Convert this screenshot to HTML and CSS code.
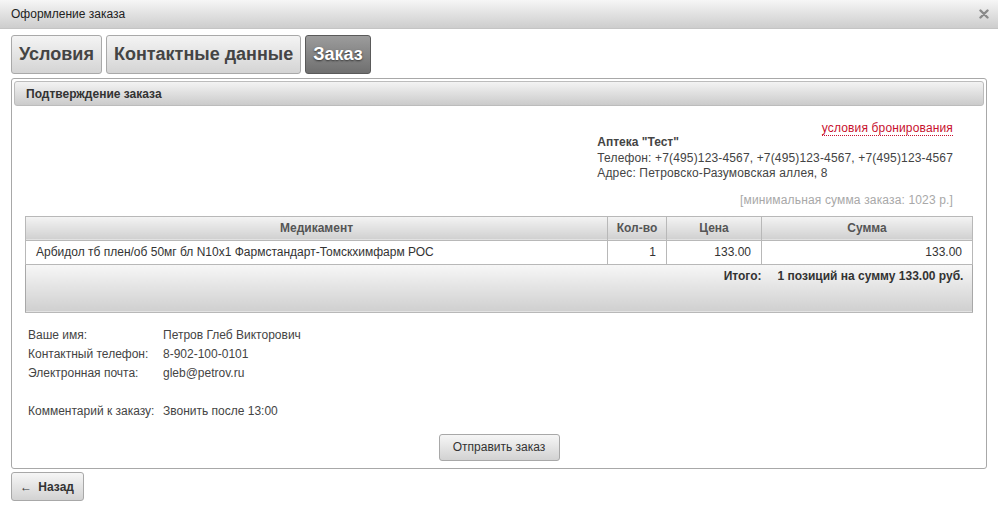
FILE: index.html
```html
<!DOCTYPE html>
<html lang="ru">
<head>
<meta charset="utf-8">
<title>Оформление заказа</title>
<link rel="stylesheet" href="styles.css">
</head>
<body>
<div class="dialog">
  <div class="titlebar">
    <span class="title">Оформление заказа</span>
    <span class="close" aria-label="Закрыть">
      <svg width="10" height="10" viewBox="0 0 10 10"><path d="M1.5 1.5 L8.5 8.5 M8.5 1.5 L1.5 8.5" stroke="#8a8a8a" stroke-width="2.4" stroke-linecap="round"/></svg>
    </span>
  </div>

  <div class="tabs">
    <div class="tab">Условия</div>
    <div class="tab">Контактные данные</div>
    <div class="tab active">Заказ</div>
  </div>

  <div class="panel">
    <div class="panel-head">Подтверждение заказа</div>
    <div class="panel-body">
      <div class="shop">
        <div class="shop-inner">
          <div class="terms-row"><a class="terms" href="#">условия бронирования</a></div>
          <div class="shop-name">Аптека "Тест"</div>
          <div>Телефон: +7(495)123-4567, +7(495)123-4567, +7(495)123-4567</div>
          <div>Адрес: Петровско-Разумовская аллея, 8</div>
          <div class="min-sum">[минимальная сумма заказа: 1023 р.]</div>
        </div>
      </div>

      <table class="order">
        <colgroup>
          <col class="c-name">
          <col class="c-qty">
          <col class="c-price">
          <col class="c-sum">
        </colgroup>
        <thead>
          <tr>
            <th>Медикамент</th>
            <th>Кол-во</th>
            <th>Цена</th>
            <th>Сумма</th>
          </tr>
        </thead>
        <tbody>
          <tr>
            <td class="name">Арбидол тб плен/об 50мг бл N10х1 Фармстандарт-Томскхимфарм РОС</td>
            <td class="num">1</td>
            <td class="num">133.00</td>
            <td class="num">133.00</td>
          </tr>
        </tbody>
        <tfoot>
          <tr>
            <td colspan="3" class="total-label">Итого:</td>
            <td class="total-value">1 позиций на сумму 133.00 руб.</td>
          </tr>
        </tfoot>
      </table>

      <div class="contacts">
        <div class="lbl">Ваше имя:</div><div class="val">Петров Глеб Викторович</div>
        <div class="lbl">Контактный телефон:</div><div class="val">8-902-100-0101</div>
        <div class="lbl">Электронная почта:</div><div class="val">gleb@petrov.ru</div>
        <div class="lbl gap">Комментарий к заказу:</div><div class="val gap">Звонить после 13:00</div>
      </div>

      <div class="actions">
        <button class="btn send" type="button">Отправить заказ</button>
      </div>
    </div>
  </div>

  <div class="back-row">
    <button class="btn back" type="button"><span class="arrow">&#8592;</span> Назад</button>
  </div>
</div>
</body>
</html>
```

FILE: styles.css
```css
html, body {
  margin: 0;
  padding: 0;
  background: #fff;
}

body {
  font-family: "Liberation Sans", Arial, sans-serif;
  font-size: 12px;
  color: #333;
}

.dialog {
  width: 998px;
  height: 510px;
}

.titlebar {
  height: 29px;
  display: flex;
  align-items: center;
  justify-content: space-between;
  padding: 0 9px 0 11px;
  box-sizing: border-box;
  background: linear-gradient(#f6f6f6, #cdcdcd);
  border-bottom: 1px solid #c4c4c4;
}

.title {
  font-size: 12px;
  color: #222;
}

.close {
  display: flex;
  width: 10px;
  height: 10px;
}

.tabs {
  display: flex;
  gap: 4px;
  margin: 6px 11px 0;
}

.tab {
  height: 39px;
  box-sizing: border-box;
  padding: 0 7px;
  display: flex;
  align-items: center;
  font-size: 18px;
  font-weight: bold;
  color: #444;
  border: 1px solid #a9a9a9;
  border-radius: 3px;
  background: linear-gradient(#f4f4f4, #d4d4d4);
}

.tab.active {
  color: #fff;
  background: linear-gradient(#9c9c9c, #6f6f6f);
  border-color: #5a5a5a;
  text-shadow: 0 1px 2px #333;
}

.panel {
  margin: 4px 11px 0;
  border: 1px solid #a8a8a8;
  border-radius: 3px;
  padding: 2px;
  height: 391px;
  box-sizing: border-box;
}

.panel-head {
  height: 25px;
  box-sizing: border-box;
  display: flex;
  align-items: center;
  padding-left: 11px;
  font-weight: bold;
  color: #333;
  border: 1px solid #bcbcbc;
  border-radius: 3px;
  background: linear-gradient(#f3f3f3, #cbcbcb);
}

.panel-body {
  padding: 0 11px;
}

.shop {
  display: flex;
  justify-content: flex-end;
  padding-right: 20px;
  margin-top: 15px;
}

.shop-inner {
  line-height: 15.5px;
  color: #444;
  letter-spacing: 0.15px;
}

.terms-row {
  text-align: right;
  line-height: 14px;
  height: 14px;
}

.terms {
  color: #c8102e;
  text-decoration: none;
  border-bottom: 1px dotted #c8102e;
}

.shop-name {
  font-weight: bold;
  color: #444;
  letter-spacing: 0;
}

.min-sum {
  text-align: right;
  color: #a8a8a8;
  margin-top: 10px;
  line-height: 16px;
}

.order {
  margin-top: 8px;
  width: 947px;
  table-layout: fixed;
  border-collapse: collapse;
  border: 1px solid #a8a8a8;
  font-size: 12px;
  color: #333;
}

.c-name { width: 582px; }
.c-qty { width: 59px; }
.c-price { width: 95px; }
.c-sum { width: 211px; }

.order th {
  height: 23px;
  padding: 0;
  font-weight: bold;
  color: #555;
  text-align: center;
  border: 1px solid #b8b8b8;
  background: linear-gradient(#f4f4f4, #d0d0d0);
}

.order td {
  height: 23px;
  padding: 0 10px;
  border: 1px solid #b8b8b8;
  background: #fff;
  white-space: nowrap;
}

.order td.num {
  text-align: right;
}

.order tfoot td {
  height: 43px;
  vertical-align: top;
  padding-top: 4px;
  font-weight: bold;
  color: #333;
  border-left: none;
  border-right: none;
  background: linear-gradient(#f7f7f7, #cfcfcf);
}

.order tfoot td.total-label {
  text-align: right;
  padding-right: 0;
}

.order tfoot td.total-value {
  padding-left: 16px;
}

.contacts {
  display: grid;
  grid-template-columns: 135px auto;
  line-height: 19px;
  margin-top: 13px;
  padding-left: 3px;
  color: #444;
}

.contacts .gap {
  margin-top: 19px;
}

.actions {
  display: flex;
  justify-content: center;
  margin-top: 13px;
}

.btn {
  font-family: "Liberation Sans", Arial, sans-serif;
  font-size: 12px;
  color: #333;
  border: 1px solid #a8a8a8;
  border-radius: 3px;
  background: linear-gradient(#f6f6f6, #d2d2d2);
  cursor: pointer;
}

.send {
  width: 121px;
  height: 27px;
  padding: 0;
}

.back-row {
  margin: 3px 11px 0;
}

.back {
  width: 73px;
  height: 29px;
  padding: 0 0 0 8px;
  font-weight: bold;
  text-align: left;
}

.arrow {
  font-weight: normal;
  margin-right: 3px;
}
```
